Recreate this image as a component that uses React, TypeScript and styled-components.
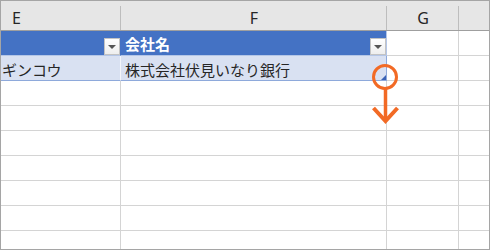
import React from "react";
import styled, { createGlobalStyle } from "styled-components";

const Global = createGlobalStyle`
  html, body { margin: 0; padding: 0; background: #ffffff; }
  * { box-sizing: border-box; }
`;

const COLS = "120px 266px 72px 30px";

const Wrapper = styled.div`
  position: relative;
  width: 490px;
  height: 250px;
`;

const Sheet = styled.div`
  width: 490px;
  height: 250px;
  border: 1px solid #a5a5a5;
  background: #ffffff;
  overflow: hidden;
  display: flex;
  flex-direction: column;
`;

const HeaderRow = styled.div`
  display: grid;
  grid-template-columns: ${COLS};
  height: 30px;
  flex: none;
  background: #e6e6e6;
  border-bottom: 1px solid #9f9f9f;
`;

const ColHeader = styled.div<{ $align?: "left" | "center"; $last?: boolean }>`
  position: relative;
  display: flex;
  align-items: center;
  justify-content: ${(p) => (p.$align === "left" ? "flex-start" : "center")};
  padding-left: ${(p) => (p.$align === "left" ? "11px" : "0")};
  padding-top: 4px;
  font-family: "Noto Sans", "Liberation Sans", sans-serif;
  font-size: 16px;
  color: #262626;
  &::after {
    content: "";
    display: ${(p) => (p.$last ? "none" : "block")};
    position: absolute;
    right: 0;
    top: 5px;
    bottom: 0;
    width: 1px;
    background: #bdbdbd;
  }
`;

const Row = styled.div`
  display: grid;
  grid-template-columns: ${COLS};
  height: 25px;
  flex: none;
`;

type Kind = "head" | "band" | "plain";

const Cell = styled.div<{ $kind: Kind; $right?: string; $bottom?: string; $last?: boolean }>`
  position: relative;
  display: flex;
  align-items: center;
  justify-content: space-between;
  padding-left: ${(p) => (p.$kind === "plain" ? "0" : "4px")};
  background: ${(p) =>
    p.$kind === "head" ? "#4472c4" : p.$kind === "band" ? "#d9e1f2" : "#ffffff"};
  border-right: ${(p) => (p.$last ? "none" : `1px solid ${p.$right ?? "#d4d4d4"}`)};
  border-bottom: 1px solid ${(p) => p.$bottom ?? "#d4d4d4"};
  font-family: "Noto Sans CJK JP", "Noto Sans", sans-serif;
  font-size: 15px;
  color: ${(p) => (p.$kind === "head" ? "#ffffff" : "#262626")};
  font-weight: ${(p) => (p.$kind === "head" ? 700 : 400)};
  white-space: nowrap;
`;

const CellText = styled.span<{ $shift?: number }>`
  line-height: 1;
  transform: translateY(${(p) => p.$shift ?? 0}px);
`;

const FilterButton = styled.div`
  align-self: flex-end;
  width: 16px;
  height: 17px;
  flex: none;
  display: flex;
  align-items: center;
  justify-content: center;
  border: 1px solid #c3c3c3;
  background: linear-gradient(#ffffff, #eeeeee);
  &::before {
    content: "";
    width: 0;
    height: 0;
    border-left: 4px solid transparent;
    border-right: 4px solid transparent;
    border-top: 4px solid #555555;
    margin-top: 1px;
  }
`;

const ResizeHandle = styled.div`
  position: absolute;
  right: 0;
  bottom: 0;
  width: 5px;
  height: 5px;
  background: #3a62b5;
  clip-path: polygon(100% 0, 100% 100%, 0 100%);
`;

const Annotation = styled.svg`
  position: absolute;
  left: 0;
  top: 0;
  pointer-events: none;
`;

const ORANGE = "#f26a25";

export default function App() {
  const emptyRows = Array.from({ length: 7 });
  return (
    <>
      <Global />
      <Wrapper>
        <Sheet>
          <HeaderRow>
            <ColHeader $align="left">E</ColHeader>
            <ColHeader>F</ColHeader>
            <ColHeader>G</ColHeader>
            <ColHeader $last />
          </HeaderRow>
          <Row>
            <Cell $kind="head" $right="#4472c4" $bottom="#b4c6e7">
              <span />
              <FilterButton />
            </Cell>
            <Cell $kind="head" $right="#b4c6e7" $bottom="#b4c6e7">
              <CellText>会社名</CellText>
              <FilterButton />
            </Cell>
            <Cell $kind="plain" />
            <Cell $kind="plain" $last />
          </Row>
          <Row>
            <Cell $kind="band" $right="#f4f6fb" $bottom="#8ea9db" style={{ paddingLeft: 1 }}>
              <CellText $shift={1}>ギンコウ</CellText>
            </Cell>
            <Cell $kind="band" $right="#8ea9db" $bottom="#8ea9db">
              <CellText $shift={1}>株式会社伏見いなり銀行</CellText>
              <ResizeHandle />
            </Cell>
            <Cell $kind="plain" />
            <Cell $kind="plain" $last />
          </Row>
          {emptyRows.map((_, i) => (
            <Row key={i}>
              <Cell $kind="plain" />
              <Cell $kind="plain" />
              <Cell $kind="plain" />
              <Cell $kind="plain" $last />
            </Row>
          ))}
        </Sheet>
        <Annotation width="490" height="250" viewBox="0 0 490 250">
          <circle cx="385" cy="77" r="11.5" fill="none" stroke={ORANGE} strokeWidth="3" />
          <line x1="385.5" y1="89" x2="385.5" y2="121" stroke={ORANGE} strokeWidth="3.5" />
          <polyline
            points="373.5,108 385.5,121 397.5,108"
            fill="none"
            stroke={ORANGE}
            strokeWidth="4"
            strokeLinejoin="miter"
          />
        </Annotation>
      </Wrapper>
    </>
  );
}
